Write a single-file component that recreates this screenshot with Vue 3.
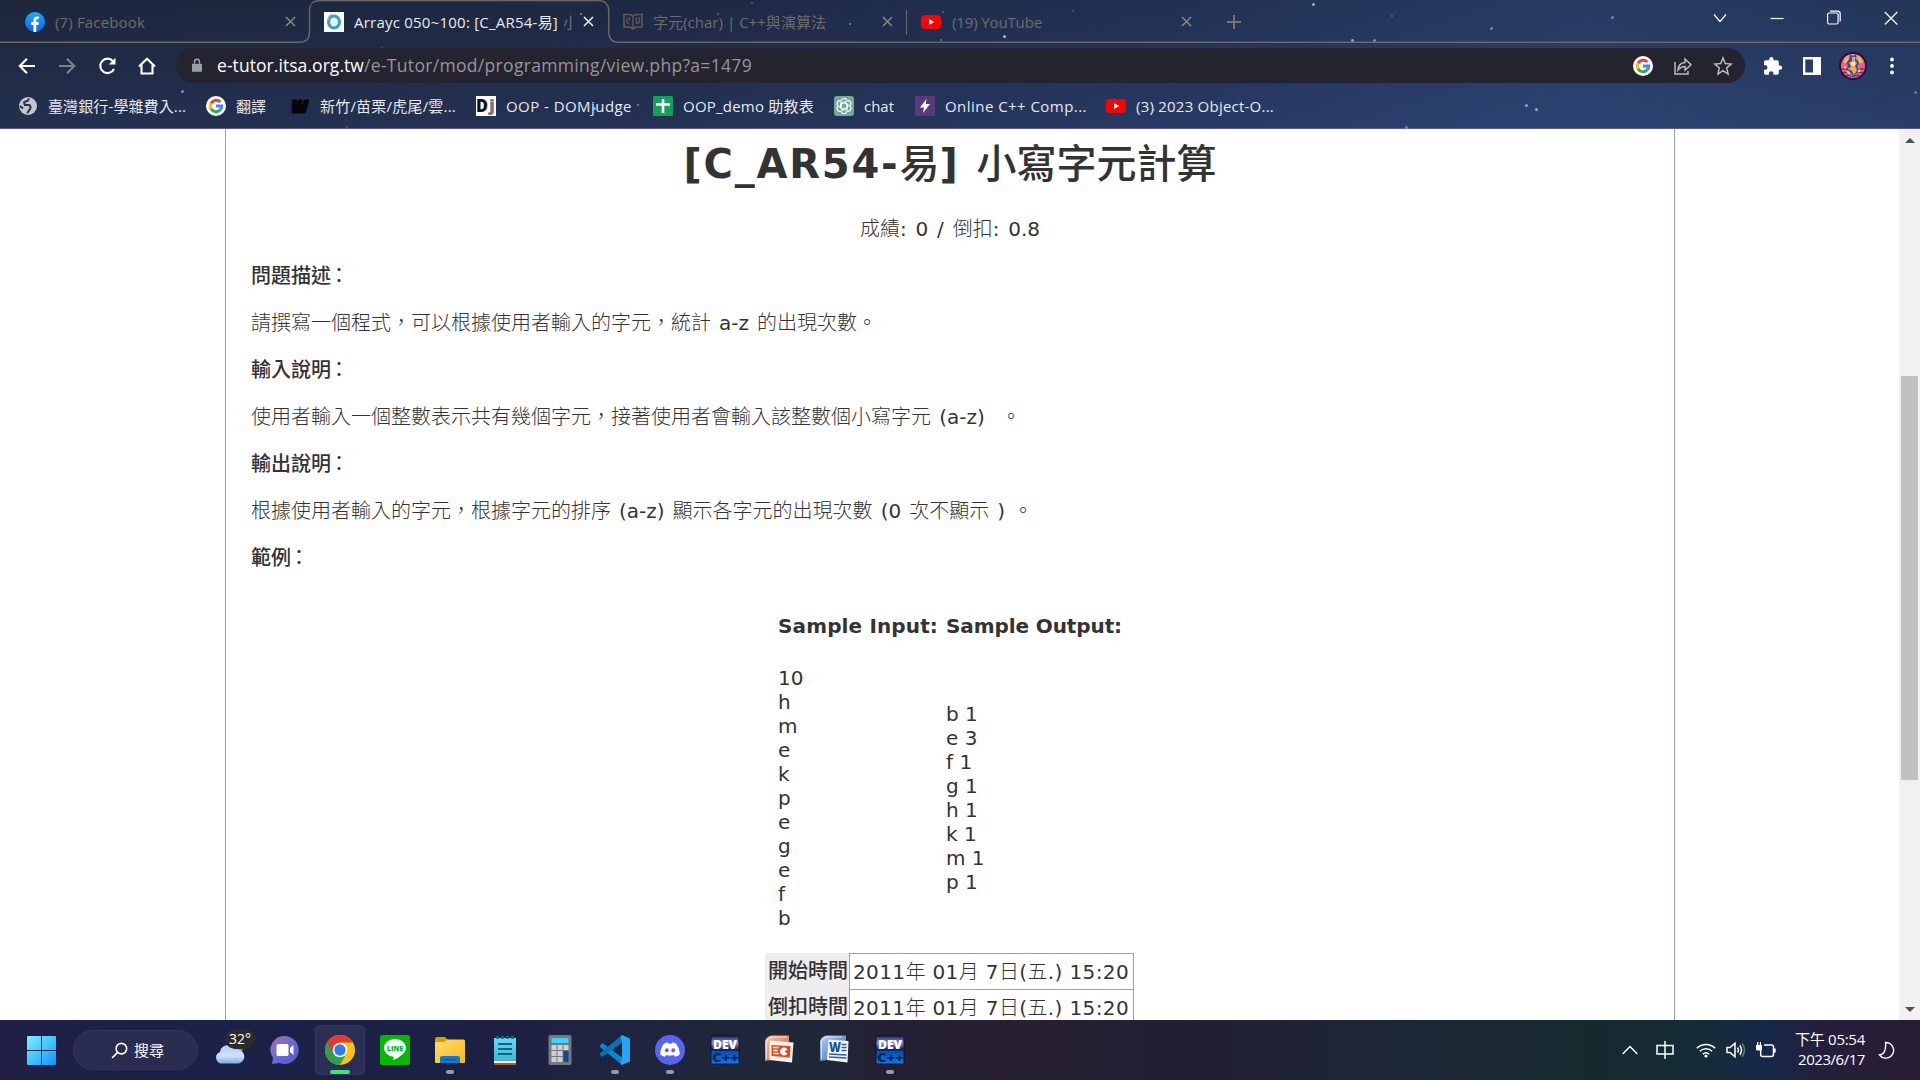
<script setup>
const fit = (el, { value, modifiers }) => {
  const text = el.textContent
  const slack = value - el.getBoundingClientRect().width
  if (modifiers.words) {
    el.style.wordSpacing = `${slack / (text.match(/[ \u00a0]/g) || [1]).length}px`
  } else {
    el.style.letterSpacing = `${slack / text.length}px`
  }
}
const vFit = { mounted: fit }

// Odd entries are runs of Latin characters, even entries everything else.
const runs = (text) => text.split(/([\x21-\x7e]+)/)

const tabs = [
  { icon: 'facebook', title: '(7) Facebook', w: 90, box: 302, pad: 25, gap: 10 },
  { icon: 'ring', title: 'Arrayc 050~100: [C_AR54-易]', w: 204, tail: '小', box: 298, pad: 22, gap: 10, active: true },
  { icon: 'book', title: '字元(char) | C++與演算法', w: 173, box: 299, pad: 23, gap: 10 },
  { icon: 'youtube', title: '(19) YouTube', w: 90, box: 299, pad: 22, gap: 11, split: true },
]
const bookmarks = [
  { icon: 'globe', title: '臺灣銀行-學雜費入...', w: 138, box: 188 },
  { icon: 'google', title: '翻譯', w: 30, box: 84 },
  { icon: 'wbold', title: '新竹/苗栗/虎尾/雲...', w: 136, box: 186 },
  { icon: 'dj', title: 'OOP - DOMjudge', w: 126, box: 177 },
  { icon: 'sheet', title: 'OOP_demo 助教表', w: 131, box: 181 },
  { icon: 'gpt', title: 'chat', w: 30, box: 81 },
  { icon: 'bolt', title: 'Online C++ Comp...', w: 142, box: 191 },
  { icon: 'youtube', title: '(3) 2023 Object-O...', w: 138, box: 200 },
]
const apps = [
  { icon: 'meet' },
  { icon: 'chrome', active: true },
  { icon: 'line' },
  { icon: 'folder', open: true },
  { icon: 'notepad' },
  { icon: 'calc' },
  { icon: 'vscode', open: true },
  { icon: 'discord', open: true },
  { icon: 'dev' },
  { icon: 'ppt' },
  { icon: 'word' },
  { icon: 'dev', open: true },
]
const letters = {
  dj: [
    { t: 'D', x: 0, y: 15.5, size: 18, len: 12, fill: '#111' },
    { t: 'j', x: 13, y: 15, size: 16, len: 6, fill: '#777' },
  ],
  line: [{ t: 'LINE', x: 7, y: 15.7, size: 6.5, len: 16, fill: '#00b900' }],
  dev: [
    { t: 'DEV', x: 3, y: 13.5, size: 12, len: 24, fill: '#fff' },
    { t: 'C++', x: 2, y: 26.5, size: 13, len: 27, fill: '#06265c' },
  ],
  word: [{ t: 'W', x: 9, y: 17, size: 14, len: 12, fill: '#1e4f9f' }],
}
const stars = [
  [581, 14, 2, 0.7], [382, 48, 2, 0.3], [182, 91, 3, 0.7], [347, 127, 2, 0.3], [594, 108, 3, 0.8],
  [638, 105, 2, 0.6], [752, 3, 2, 0.4], [718, 14, 2, 0.4], [850, 24, 2, 0.6], [943, 12, 2, 0.4],
  [1004, 36, 3, 1], [941, 40, 2, 0.5], [1073, 11, 2, 0.3], [1154, 110, 2, 0.5], [1313, 4, 3, 0.9],
  [1392, 16, 2, 0.4], [1491, 28, 3, 0.6], [1352, 40, 3, 0.9], [1374, 40, 3, 0.7], [1612, 17, 3, 0.6],
  [1526, 105, 3, 0.8], [1536, 109, 3, 0.9], [1406, 127, 3, 0.6], [1915, 92, 3, 0.5],
]
const sections = [
  { head: '問題描述', body: '請撰寫一個程式，可以根據使用者輸入的字元，統計 a-z 的出現次數。', w: 626 },
  { head: '輸入說明', body: '使用者輸入一個整數表示共有幾個字元，接著使用者會輸入該整數個小寫字元 (a-z)\u00a0\u00a0。', w: 770 },
  { head: '輸出說明', body: '根據使用者輸入的字元，根據字元的排序 (a-z) 顯示各字元的出現次數 (0 次不顯示 ) 。', w: 782 },
  { head: '範例' },
]
const sampleIn = ['10', 'h', 'm', 'e', 'k', 'p', 'e', 'g', 'e', 'f', 'b']
const sampleOut = ['b 1', 'e 3', 'f 1', 'g 1', 'h 1', 'k 1', 'm 1', 'p 1']
const dates = ['開始時間', '倒扣時間']
</script>

<template>
  <div class="desktop">
    <svg class="defs" width="0" height="0">
      <defs>
        <linearGradient id="gFb" x1="0" y1="0" x2="0" y2="1"><stop offset="0" stop-color="#19afff" /><stop offset="1" stop-color="#0866e8" /></linearGradient>
        <linearGradient id="gWin" x1="0" y1="0" x2="1" y2="1"><stop offset="0" stop-color="#7df1ff" /><stop offset="1" stop-color="#0a98fb" /></linearGradient>
        <linearGradient id="gCloud" x1="0" y1="0" x2="0" y2="1"><stop offset="0" stop-color="#b5d0f8" /><stop offset=".6" stop-color="#cfe0fa" /><stop offset="1" stop-color="#7fabe8" /></linearGradient>
        <linearGradient id="gMeet" x1="0" y1="0" x2="1" y2="1"><stop offset="0" stop-color="#b06ab5" /><stop offset=".45" stop-color="#6c6cd0" /><stop offset="1" stop-color="#5157cf" /></linearGradient>
        <linearGradient id="gFold" x1="0" y1="0" x2="1" y2="1"><stop offset="0" stop-color="#ffdc6b" /><stop offset="1" stop-color="#f9b81c" /></linearGradient>
        <linearGradient id="gNote" x1="0" y1="0" x2="0" y2="1"><stop offset="0" stop-color="#6cd7ee" /><stop offset="1" stop-color="#3fb4d3" /></linearGradient>
        <linearGradient id="gDev" x1="0" y1="0" x2="0" y2="1"><stop offset="0" stop-color="#26265c" /><stop offset=".25" stop-color="#8f90c8" /><stop offset=".5" stop-color="#15183f" /><stop offset=".55" stop-color="#0a4fae" /><stop offset="1" stop-color="#0b7cf0" /></linearGradient>
        <linearGradient id="gPpt" x1="0" y1="0" x2="1" y2="1"><stop offset="0" stop-color="#f9c9b2" /><stop offset="1" stop-color="#e2501d" /></linearGradient>
        <linearGradient id="gWord" x1="0" y1="0" x2="1" y2="1"><stop offset="0" stop-color="#b9d3f3" /><stop offset="1" stop-color="#2a60b5" /></linearGradient>
      </defs>
      <symbol id="facebook" viewBox="0 0 20 20"><circle cx="10" cy="10" r="10" fill="url(#gFb)" /><path d="M8.4 20v-7H6.2v-3h2.2V8.200c0-2.400 1.300-3.800 3.600-3.800.8 0 1.600.1 1.900.2v2.500h-1.200c-1.100 0-1.400.6-1.400 1.300V10h2.500l-.4 3h-2.100v7z" fill="#fff" /></symbol>
      <symbol id="ring" viewBox="0 0 20 20"><path d="M0 0h20v20H0z" fill="#fff" /><ellipse cx="10" cy="10" rx="5.500" ry="6" fill="#e3f1f5" stroke="#3e9fbb" stroke-width="3" /><path d="M4 8Q5 3 8 2.500" stroke="#9bb7c2" stroke-width="1.500" fill="none" /></symbol>
      <symbol id="book" viewBox="0 0 20 20"><path d="M1 2.500h6l3 1.500 3-1.500h6V15h-6l-3 2-3-2H1z" fill="none" stroke="#5f5c58" stroke-width="1.600" /><path d="M10 4V16M4 5.500v5l2 1.500M6.500 5v4M13.500 5v7M16.500 5v5l-2 2" fill="none" stroke="#5f5c58" stroke-width="1.300" /></symbol>
      <symbol id="youtube" viewBox="0 0 20 20"><rect y="3" width="20" height="14" rx="4" fill="#f00" /><path d="M8 7l5.200 3L8 13z" fill="#fff" /></symbol>
      <symbol id="globe" viewBox="0 0 20 20"><circle cx="10" cy="10" r="9" fill="#c3c7cc" /><path d="M11 2.500q-1 3-3.500 3T7 9h4q2.500 1 1 4t-3 4M2 10l3 2.500" fill="none" stroke="#25304c" stroke-width="2" /></symbol>
      <symbol id="google" viewBox="0 0 20 20"><circle cx="10" cy="10" r="10" fill="#fff" /><g fill="none" stroke-width="3"><path d="M14.300 6.100A5.800 5.800 0 0 0 5 7.200" stroke="#ea4335" /><path d="M5 7.200a5.800 5.800 0 0 0 0 5.600" stroke="#fbbc05" /><path d="M5 12.800a5.800 5.800 0 0 0 8.900 1.400" stroke="#34a853" /><path d="M13.900 14.200A5.500 5.500 0 0 0 15.700 10H10" stroke="#4285f4" /></g></symbol>
      <symbol id="wbold" viewBox="0 0 20 20"><path d="M2.500 4h4l-1 9 3-9H12l-.7 9L14.500 4H19l-4 13H9.500l.3-4-1.600 4H2z" fill="#050507" stroke="#050507" /></symbol>
      <symbol id="dj" viewBox="0 0 20 20"><path d="M0 0h20v20H0z" fill="#fff" /></symbol>
      <symbol id="sheet" viewBox="0 0 20 20"><rect width="20" height="20" rx="1.500" fill="#12a05c" /><path d="M10 3v14M3 8.500h14" stroke="#fff" stroke-width="2.600" /></symbol>
      <symbol id="gpt" viewBox="0 0 20 20"><rect width="20" height="20" rx="3" fill="#74aa9c" /><g fill="none" stroke="#fff" stroke-width="1.100"><path id="pet" d="M10 6.300L7 8V5.500a3 3 0 0 1 5.800-1.200M10 6.300l3.200 1.900v3.600" /><use href="#pet" transform="rotate(60 10 10)" /><use href="#pet" transform="rotate(120 10 10)" /><use href="#pet" transform="rotate(180 10 10)" /><use href="#pet" transform="rotate(240 10 10)" /><use href="#pet" transform="rotate(300 10 10)" /></g></symbol>
      <symbol id="bolt" viewBox="0 0 20 20"><path d="M0 0h20v20H0z" fill="#573c7c" /><path d="M11.500 3L5 11.500h4L8 17l7-9h-4.200z" fill="#fff" /></symbol>
      <symbol id="meet" viewBox="0 0 30 30"><path d="M15 1a14 14 0 1 1-5.500 27L2 29l1-6A14 14 0 0 1 15 1z" fill="url(#gMeet)" /><rect x="6.500" y="9" width="12" height="12" rx="1.500" fill="#fff" /><path d="M20 13l3.500-3v10L20 17z" fill="#fff" /></symbol>
      <symbol id="chrome" viewBox="0 0 30 30"><circle cx="15" cy="15" r="15" fill="#fbc116" /><path d="M2 7.500A15 15 0 0 0 15 30l6.500-11.500L15 15z" fill="#2da04e" /><path d="M2 7.500A15 15 0 0 1 28 7.500H15L8.500 18.700z" fill="#e23c2f" /><circle cx="15" cy="15" r="7.300" fill="#fff" /><circle cx="15" cy="15" r="5.700" fill="#2b7df0" /></symbol>
      <symbol id="line" viewBox="0 0 30 30"><rect width="30" height="30" rx="2.500" fill="#00b900" /><path d="M15 4C8.700 4 4 8 4 13c0 4.300 3.600 7.700 8.700 8.600.9.200 1 .7.700 3.500 4.500-2 12.600-6.600 12.600-12.100C26 8 21.300 4 15 4z" fill="#fff" /></symbol>
      <symbol id="folder" viewBox="0 0 30 30"><path d="M0 4q0-2 2-2h8l3 3h-2l-2 3H0z" fill="#dd9b06" /><path d="M0 7h9l3-2.500h16.500q1.500 0 1.500 1.500v21q0 1-1 1H1q-1 0-1-1z" fill="url(#gFold)" /><path d="M5 28v-5q0-2 2-2h16q2 0 2 2v5z" fill="#1579ca" /><path d="M8.500 24.700h13" stroke="#0b4f8e" stroke-width="1.200" /></symbol>
      <symbol id="notepad" viewBox="0 0 30 30"><path d="M4 26h22v3q0 1-1 1H5q-1 0-1-1z" fill="#b45a16" /><path d="M4 3h22v24H4z" fill="url(#gNote)" /><path d="M4 26h22v2H4z" fill="#f3efe8" /><g fill="#0b5f80"><circle cx="7.500" cy="2.200" r="1.800" /><circle cx="12.500" cy="2.200" r="1.800" /><circle cx="17.500" cy="2.200" r="1.800" /><circle cx="22.500" cy="2.200" r="1.800" /></g><path d="M8 9h14M8 14h14M8 19h14" stroke="#08668c" stroke-width="1.800" /></symbol>
      <symbol id="calc" viewBox="0 0 30 30"><rect x="3.500" width="23" height="30" rx="1.500" fill="#75797f" /><path d="M6.500 3h17v5h-17z" fill="#3dd5fb" /><path d="M6.500 10h5v5h-5zM12.500 10h5v5h-5zM18.500 10h5v5h-5zM6.500 16h5v5h-5zM12.500 16h5v5h-5zM6.500 22h5v5h-5zM12.500 22h5v5h-5z" fill="#ccd2da" /><path d="M18.500 16h5v11h-5z" fill="#134a8e" /></symbol>
      <symbol id="vscode" viewBox="0 0 30 30"><path d="M0 10.500L2.500 8 22 22.500V30L0 12z" fill="#0a86d2" /><path d="M22 0v7.500L2.500 22 0 19.800v-1.500z" fill="#0872b8" /><path d="M22 0l8 3.500v23L22 30l-1.500-1.500L22 22V8l-1.500-6.500z" fill="#27a5f2" /></symbol>
      <symbol id="discord" viewBox="0 0 30 30"><circle cx="15" cy="15" r="15" fill="#5865f2" /><path d="M9 8.500Q11 7.500 13 7.400l.7 1.300h2.600l.7-1.300q2 .1 4 1.100 4 5.500 3.700 11-2 1.800-4.700 2.300l-1-1.800q-4 1.200-8 0l-1 1.800q-2.700-.5-4.700-2.300Q5 14 9 8.500z" fill="#fff" /><ellipse cx="11.800" cy="15.300" rx="1.900" ry="2.100" fill="#5865f2" /><ellipse cx="18.200" cy="15.300" rx="1.900" ry="2.100" fill="#5865f2" /></symbol>
      <symbol id="dev" viewBox="0 0 30 30"><rect x="1" y="1" width="28" height="28" rx="1.500" fill="url(#gDev)" stroke="#0c1233" /></symbol>
      <symbol id="ppt" viewBox="0 0 30 30"><path d="M0 26V6Q2 .5 8 .5h16V22z" fill="url(#gPpt)" /><path d="M1.500 24V7Q3 2 8 2h14" stroke="#fff" stroke-opacity=".6" fill="none" /><path d="M4.500 5.500l24 2L27 27.500 4.500 25z" fill="#fff4ef" /><path d="M6.500 10l19 1-.7 11.500L6.500 21z" fill="#e5481b" /><path d="M8 12.500h6M8 15.500h5M8 18.500h6" stroke="#fff" stroke-width="1.700" /><path d="M22.500 14.500a4 4 0 1 0 0 4l-3-2z" fill="#fff" /></symbol>
      <symbol id="word" viewBox="0 0 30 30"><path d="M0 26V6Q2 .5 8 .5h18V22z" fill="url(#gWord)" /><path d="M1.500 24V7Q3 2 8 2h14" stroke="#fff" stroke-opacity=".6" fill="none" /><path d="M8.500 4.500l20 1.500L27.500 27.500 7 25z" fill="#f3f7fd" /><path d="M21.500 9.500h5M21.500 12.500h5M21.500 15.500h5M9 19l17.500 1M9 22l17.500 1" stroke="#2a5cae" stroke-width="1.500" /></symbol>
    </svg>

    <header class="chrome">
      <i v-for="(s, i) in stars" :key="i" class="star" :style="{ left: s[0] - 1 + 'px', top: s[1] - 1 + 'px', width: s[2] + 'px', height: s[2] + 'px', opacity: s[3] }"></i>
      <svg class="outline" width="1920" height="44" viewBox="0 0 1920 44"><path d="M0 42.300H299Q309.500 42.300 309.500 32V11Q309.500.5 320 .5H598Q608.700.5 608.700 11V32Q608.700 42.300 619 42.300H1920" /></svg>
      <div class="strip">
        <div v-for="t in tabs" :key="t.title" class="tab" :class="{ active: t.active, split: t.split }" :style="{ width: t.box + 'px', paddingLeft: t.pad + 'px', columnGap: t.gap + 'px' }">
          <svg class="fav"><use :href="'#' + t.icon" /></svg>
          <span class="label"><span v-fit="t.w" class="ib">{{ t.title }}</span><span v-if="t.tail" class="tail">{{ t.tail }}</span></span>
          <svg class="x" viewBox="0 0 11 11"><path d="M1 1l9 9M10 1l-9 9" /></svg>
        </div>
        <svg class="plus" viewBox="0 0 16 16"><path d="M8 1v14M1 8h14" /></svg>
        <div class="winctl">
          <svg viewBox="0 0 14 20"><path d="M1 6.500l6 7 6-7" /></svg>
          <svg viewBox="0 0 14 20"><path d="M.5 10.500h13" /></svg>
          <svg viewBox="0 0 14 20"><rect x=".6" y="5" width="10.500" height="11" rx="1.500" /><path d="M3 3.200h7.500q2.700 0 2.700 2.700v7.600" /></svg>
          <svg viewBox="0 0 14 20"><path d="M.8 4l12.500 12.500M13.300 4L.8 16.500" /></svg>
        </div>
      </div>
      <div class="toolbar">
        <div class="nav">
          <svg viewBox="0 0 20 20"><path d="M18 10H3M10 2.800L2.800 10l7.200 7.200" /></svg>
          <svg class="dim" viewBox="0 0 20 20"><path d="M2 10h15M10 2.800l7.200 7.200-7.200 7.200" /></svg>
          <svg viewBox="0 0 20 20"><path d="M17 13A7.200 7.200 0 1 1 16 5.200L17.500 7" /><path d="M18.500 1.800V8.500h-6.700z" class="solid" /></svg>
          <svg viewBox="0 0 20 20"><path d="M2 10.500L10 2.800l8 7.700M4.500 9v8.500h11V9" /></svg>
        </div>
        <div class="omni">
          <svg class="lock" viewBox="0 0 14 18"><path d="M1 7h12v9.500H1z" fill="#9aa0a6" /><path d="M4 7V4.500a3 3 0 0 1 6 0V7" fill="none" stroke="#9aa0a6" stroke-width="1.700" /></svg>
          <span class="url"><span v-fit="147" class="ib host">e-tutor.itsa.org.tw</span><span v-fit="388" class="ib">/e-Tutor/mod/programming/view.php?a=1479</span></span>
          <svg class="og"><use href="#google" /></svg>
          <svg class="oi" viewBox="0 0 20 20"><path d="M2 6v12h13v-3" /><path d="M5 14q.5-7 7-7.500V3l6 5.700-6 5.300v-3.500Q8 10.500 5 14z" /></svg>
          <svg class="oi" viewBox="0 0 20 20"><path d="M10 2l2.300 5.500 6 .5-4.600 3.900L15.100 18 10 14.600 4.900 18l1.400-6.100L1.700 8l6-.5z" /></svg>
        </div>
        <svg class="ext" viewBox="0 0 20 20"><path d="M17 9.500h-1.200V6q0-1.700-1.700-1.700h-3.600V3a2.100 2.100 0 0 0-4.200 0v1.300H2.700Q1 4.300 1 6v3.200h1.200a2.300 2.300 0 0 1 0 4.600H1V17q0 1.700 1.700 1.700h3.200v-1.200a2.300 2.300 0 0 1 4.600 0v1.200h3.600q1.700 0 1.700-1.700v-3.200H17a2.150 2.150 0 0 0 0-4.300z" fill="#fff" /></svg>
        <svg class="side" viewBox="0 0 18 18"><path d="M0 0h18v18H0zM2.300 2.500v13h7.700v-13z" fill="#fff" fill-rule="evenodd" /></svg>
        <svg class="avatar" viewBox="0 0 28 28"><circle cx="14" cy="14" r="14" fill="#241044" /><circle cx="14" cy="14" r="12" fill="#f2607c" /><path d="M6 5q8-6 16 0l2 5H4z" fill="#f6a36f" /><path d="M3 17h22M4 20.500h20M7 23.500h14" stroke="#8a1f7d" stroke-width="1.500" /><path d="M11 2l3 2 3-2 1 5 2 3-1 4 1 5-3 2-1 4h-4l-2-4-3-3 2-4-2-4 3-3z" fill="#5a3aa0" /><path d="M13 5h3v4l2 2-2 3 2 4-3 5-2-4-3-2 2-3-2-3 3-2z" fill="#f0b13c" /><path d="M12 10h4v4h-4z" fill="#ffe0b0" /><path d="M6 11l3-4M20 8l2 3M8 19l3 3M19 20l2-2M5 15l2 1" stroke="#ffd33f" stroke-width="2" /><path d="M13 8l2 1M17 5l1 3M9 16l2 2M19 14l1 3M12 22l1 2" stroke="#3ac1d6" stroke-width="1.500" /></svg>
        <svg class="dots" viewBox="0 0 4 18"><circle cx="2" cy="2.500" r="1.900" /><circle cx="2" cy="9" r="1.900" /><circle cx="2" cy="15.500" r="1.900" /></svg>
      </div>
      <div class="bookmarks">
        <div v-for="b in bookmarks" :key="b.title" class="bm" :style="{ width: b.box + 'px' }">
          <svg class="fav"><use :href="'#' + b.icon" /><text v-for="l in letters[b.icon]" :key="l.t" class="mark" :x="l.x" :y="l.y" :font-size="l.size" :textLength="l.len" :fill="l.fill" lengthAdjust="spacingAndGlyphs">{{ l.t }}</text></svg>
          <span v-fit="b.w" class="ib">{{ b.title }}</span>
        </div>
      </div>
    </header>

    <main class="view">
      <div class="sheet" lang="zh-TW">
        <h1><b v-fit="216" class="ib">[C_AR54-</b>易<b v-fit="37" class="ib pre">] </b>小寫字元計算</h1>
        <p class="score"><span v-fit.words="180" class="ib"><span v-for="(r, i) in runs('成績: 0 / 倒扣: 0.8')" :key="i" :class="{ latin: i % 2 }">{{ r }}</span></span></p>
        <template v-for="s in sections" :key="s.head">
          <p class="head">{{ s.head }}<span class="colon">：</span></p>
          <p v-if="s.body"><span v-fit.words="s.w" class="ib pre"><span v-for="(r, i) in runs(s.body)" :key="i" :class="{ latin: i % 2 }">{{ r }}</span></span></p>
        </template>
        <div class="sample">
          <div class="col in">
            <div class="cap"><b v-fit="160" class="ib">Sample Input:</b></div>
            <div class="lines"><div v-for="(l, i) in sampleIn" :key="i">{{ l }}</div></div>
          </div>
          <div class="col out">
            <div class="cap"><b v-fit="176" class="ib">Sample Output:</b></div>
            <div class="lines"><div v-for="l in sampleOut" :key="l">{{ l }}</div></div>
          </div>
        </div>
        <div class="dates">
          <div v-for="d in dates" :key="d" class="row">
            <div class="th">{{ d }}</div>
            <div class="td"><span v-fit="276" class="ib pre"><span v-for="(r, i) in runs('2011年 01月 7日(五.) 15:20')" :key="i" :class="{ latin: i % 2 }">{{ r }}</span></span></div>
          </div>
        </div>
      </div>
      <div class="scroll">
        <i class="up"></i>
        <div class="thumb"></div>
        <i class="down"></i>
      </div>
    </main>

    <footer class="taskbar">
      <svg class="win" viewBox="0 0 29 29"><path d="M1 0h13v14H0V1q0-1 1-1zM15 0h13q1 0 1 1v13H15zM0 15h14v14H1q-1 0-1-1zM15 15h14v13q0 1-1 1H15z" fill="url(#gWin)" /></svg>
      <div class="search">
        <svg viewBox="0 0 18 18"><circle cx="11" cy="7" r="5.600" /><path d="M7 11l-5.800 5.800" /></svg>
        <span>搜尋</span>
      </div>
      <div class="weather">
        <svg viewBox="0 0 30 30"><circle cx="22" cy="13" r="6.500" fill="#e8712a" /><path d="M6 29.500a6 6 0 0 1-1-11.500A8 8 0 0 1 20 15.500a7 7 0 0 1 4 14z" fill="url(#gCloud)" /></svg>
        <span class="temp">32°</span>
      </div>
      <div v-for="(a, i) in apps" :key="i" class="app" :class="{ active: a.active, open: a.open }">
        <svg><use :href="'#' + a.icon" /><text v-for="l in letters[a.icon]" :key="l.t" class="mark" :x="l.x" :y="l.y" :font-size="l.size" :textLength="l.len" :fill="l.fill" lengthAdjust="spacingAndGlyphs">{{ l.t }}</text></svg>
      </div>
      <div class="tray">
        <svg class="caret" viewBox="0 0 16 10"><path d="M.7 9L8 1.500 15.300 9" /></svg>
        <svg class="ime" viewBox="0 0 18 20"><path d="M9 1v18M1 5.500h16v8.500H1z" /></svg>
        <svg class="wifi" viewBox="0 0 20 16"><path d="M.8 6.200a13 13 0 0 1 18.400 0M3.800 9.300a8.800 8.800 0 0 1 12.400 0M6.800 12.200a4.500 4.500 0 0 1 6.400 0" /><circle cx="10" cy="14" r="1.600" fill="#fff" stroke="none" /></svg>
        <svg class="vol" viewBox="0 0 20 16"><path d="M1 5.500h3l5-4.300v13.600l-5-4.300H1zM11.500 5.500q1.800 2.500 0 5M13.800 3.300q3.400 4.700 0 9.400" /><path d="M16 1.200q5 6.800 0 13.600" opacity=".35" /></svg>
        <svg class="bat" viewBox="0 0 20 16"><path d="M8 3h7.500q2 0 2 2v7.500q0 2-2 2h-9q-1.800 0-1.800-2V8" /><path d="M0 3h6v4q0 1.500-1.500 1.500h-3Q0 8.500 0 7zM1 0h1.300v3H1zM3.800 0H5v3H3.800zM18 6.500h1.700v4H18z" fill="#fff" stroke="none" /></svg>
        <div class="clock"><span v-fit="70" class="ib">下午 05:54</span><span v-fit="67" class="ib">2023/6/17</span></div>
        <svg class="moon" viewBox="0 0 18 20"><path d="M8 1.500a8.300 8.300 0 1 1-6.500 13.200Q9 14 8 1.500z" /></svg>
      </div>
    </footer>
  </div>
</template>

<style>
body {
  margin: 0;
  overflow: hidden;
}
</style>

<style scoped>
* {
  box-sizing: border-box;
}
.desktop {
  width: 1920px;
  height: 1080px;
  overflow: hidden;
  display: flex;
  flex-direction: column;
  background: #fff;
  font-family: "Open Sans", "Noto Sans CJK TC", sans-serif;
}
.defs {
  position: absolute;
}
svg {
  display: block;
  flex: none;
}
.mark {
  font-family: "Open Sans", sans-serif;
  font-weight: 800;
}
.ib {
  display: inline-block;
  white-space: nowrap;
}
.pre {
  white-space: pre;
}
.chrome {
  position: relative;
  flex: none;
  height: 129px;
  border-bottom: 1px solid #59598c;
  background:
    linear-gradient(180deg, rgba(0, 0, 0, 0.08), rgba(60, 90, 170, 0.13)),
    linear-gradient(97deg, #1f2a41 0%, #202c48 35%, #24355a 62%, #2a3f6a 82%, #26395e 100%);
}
.star {
  position: absolute;
  border-radius: 50%;
  background: #9db9ec;
}
.outline {
  position: absolute;
  left: 0;
  top: 0;
}
.outline path {
  fill: none;
  stroke: #6a6764;
  stroke-width: 1.4;
}
.strip {
  position: relative;
  height: 43px;
  display: flex;
}
.tab {
  position: relative;
  display: flex;
  align-items: center;
  height: 43px;
  padding-right: 6px;
  font-size: 15px;
  line-height: 20px;
  color: #6f6c69;
}
.tab.active {
  color: #e9ebef;
}
.tab.split::before {
  content: "";
  position: absolute;
  left: 7px;
  top: 10px;
  width: 1px;
  height: 25px;
  background: #6a6764;
}
.fav {
  width: 20px;
  height: 20px;
}
.label {
  flex: 1;
  display: flex;
  overflow: hidden;
  white-space: nowrap;
}
.tail {
  width: 10px;
  margin-left: 5px;
  overflow: hidden;
  color: #6b7180;
}
.x {
  width: 11px;
  height: 11px;
  fill: none;
  stroke: #8a8784;
  stroke-width: 1.5;
}
.active .x {
  stroke: #f2f2f2;
}
.plus {
  align-self: center;
  width: 16px;
  height: 16px;
  margin-left: 28px;
  fill: none;
  stroke: #77746f;
  stroke-width: 2;
}
.winctl {
  display: flex;
  gap: 43px;
  margin: 8px 22px 0 auto;
}
.winctl svg {
  width: 14px;
  height: 20px;
  fill: none;
  stroke: #fff;
  stroke-width: 1.2;
}
.toolbar {
  position: relative;
  display: flex;
  align-items: center;
  height: 45px;
  padding-right: 26px;
}
.nav {
  width: 176px;
  padding-left: 17px;
  display: flex;
  gap: 20px;
}
.nav svg {
  width: 20px;
  height: 20px;
  fill: none;
  stroke: #fff;
  stroke-width: 2.1;
}
.nav .dim {
  stroke: #7f828b;
}
.nav .solid {
  fill: #fff;
  stroke: none;
}
.omni {
  display: flex;
  align-items: center;
  width: 1569px;
  height: 35px;
  border-radius: 18px;
  padding: 0 12px 0 15px;
  background: #242430;
  color: #95959a;
  font-size: 17.500px;
}
.lock {
  width: 12px;
  height: 15px;
}
.url {
  flex: 1;
  margin-left: 14px;
  line-height: 24px;
  margin-top: -1px;
}
.host {
  color: #fff;
}
.og {
  width: 20px;
  height: 20px;
}
.oi {
  width: 20px;
  height: 20px;
  margin-left: 20px;
  fill: none;
  stroke: #b9b9bd;
  stroke-width: 1.500;
}
.ext {
  width: 20px;
  height: 20px;
  margin-left: 18px;
}
.side {
  width: 18px;
  height: 18px;
  margin-left: 20px;
}
.avatar {
  width: 28px;
  height: 28px;
  margin-left: 18px;
}
.dots {
  width: 4px;
  height: 18px;
  margin-left: auto;
  fill: #fff;
}
.bookmarks {
  position: relative;
  display: flex;
  height: 36px;
  padding-left: 18px;
}
.bm {
  display: flex;
  align-items: center;
  gap: 10px;
  flex: none;
  font-size: 15px;
  line-height: 20px;
  color: #e6e9ef;
}
.view {
  display: flex;
  flex: none;
  height: 891px;
  overflow: hidden;
  background: #fff;
}
.sheet {
  width: 1450px;
  margin-left: 225px;
  border-left: 1px solid #95a3ae;
  border-right: 1px solid #95a3ae;
  padding: 11px 25px 0;
  color: #333;
  font-family: "DejaVu Sans", "Noto Sans CJK TC", sans-serif;
  font-size: 20px;
  font-weight: 300;
  line-height: 27px;
}
h1 {
  margin: 0 0 28px;
  font-size: 40px;
  line-height: 48px;
  font-weight: 500;
  text-align: center;
}
b {
  font-weight: 700;
}
p {
  margin: 0 0 20px;
  height: 27px;
}
.latin {
  font-weight: 400;
}
.score {
  text-align: center;
}
.head {
  font-weight: 500;
}
.colon {
  margin-left: -2px;
  font-weight: 400;
}
.sample {
  display: flex;
  margin: 42px 0 0 527px;
  font-weight: 400;
}
.col {
  display: flex;
  flex-direction: column;
  line-height: 24px;
}
.in {
  width: 168px;
}
.cap {
  height: 24px;
  white-space: nowrap;
}
.in .lines {
  margin-top: 28px;
}
.out .lines {
  margin-top: 64px;
}
.dates {
  margin: 23px 0 0 514px;
  width: 370px;
}
.row {
  display: flex;
  height: 36px;
}
.th {
  width: 84px;
  padding-left: 3px;
  background: #eee;
  font-weight: 500;
  line-height: 37px;
}
.td {
  width: 285px;
  border: 1px solid #95a3ae;
  border-bottom: 0;
  padding-left: 3px;
  line-height: 37px;
}
.scroll {
  position: relative;
  width: 21px;
  margin-left: auto;
  padding-top: 247px;
  background: #f1f1f1;
}
.thumb {
  width: 17px;
  height: 404px;
  margin: 0 auto;
  background: #c1c1c1;
}
.up,
.down {
  position: absolute;
  left: 6px;
  border: 5px solid transparent;
}
.up {
  top: 4px;
  border-bottom-color: #505050;
}
.down {
  bottom: 3px;
  border-top-color: #505050;
}
.taskbar {
  position: relative;
  display: flex;
  align-items: center;
  flex: none;
  height: 60px;
  color: #fff;
  background: linear-gradient(90deg, #211f45 0%, #1b2149 10%, #1d2043 25%, #1e2440 31%, #1f2837 42%, #241f33 47%, #281f32 52%, #221f33 62%, #1c2836 74%, #17292f 83%, #152c37 89%, #162849 92%, #241f3b 95%, #281e34 100%);
}
.win {
  width: 29px;
  height: 29px;
  margin-left: 27px;
}
.search {
  display: flex;
  align-items: center;
  width: 125px;
  height: 40px;
  margin-left: 17px;
  padding-left: 37px;
  gap: 6px;
  border-radius: 20px;
  border: 1px solid #343660;
  background: #2b2c52;
  font-size: 15px;
}
.search span {
  margin-top: -2px;
}
.search svg {
  width: 17px;
  height: 17px;
  fill: none;
  stroke: #fff;
  stroke-width: 1.700;
}
.weather {
  position: relative;
  width: 30px;
  height: 30px;
  margin-left: 17px;
  margin-right: 15px;
}
.weather svg {
  width: 30px;
  height: 30px;
  margin-top: -1px;
}
.temp {
  position: absolute;
  left: 10px;
  top: -6px;
  width: 30px;
  height: 20px;
  border-radius: 10px;
  background: #2b2b2b;
  font-size: 14px;
  line-height: 19px;
  text-align: center;
}
.app {
  position: relative;
  display: flex;
  align-items: center;
  justify-content: center;
  width: 50px;
  height: 50px;
  margin-right: 5px;
  border-radius: 5px;
}
.app svg {
  width: 30px;
  height: 30px;
}
.app.active {
  background: #2b2e55;
  border: 1px solid #363961;
}
.app.active::after,
.app.open::after {
  content: "";
  position: absolute;
  left: 21px;
  bottom: 1px;
  width: 8px;
  height: 4px;
  border-radius: 2px;
  background: #9a9aa6;
}
.app.active::after {
  left: 14px;
  bottom: 0;
  width: 20px;
  background: #3ee66e;
}
.tray {
  display: flex;
  align-items: center;
  margin-left: auto;
  padding-right: 25px;
}
.tray svg {
  fill: none;
  stroke: #fff;
  stroke-width: 1.500;
}
.caret {
  width: 16px;
  height: 10px;
}
.ime {
  width: 18px;
  height: 20px;
  margin-left: 18px;
}
.wifi {
  width: 20px;
  height: 16px;
  margin-left: 22px;
}
.vol {
  width: 20px;
  height: 16px;
  margin-left: 10px;
}
.bat {
  width: 20px;
  height: 16px;
  margin-left: 10px;
}
.clock {
  display: flex;
  flex-direction: column;
  align-items: flex-end;
  width: 89px;
  margin-top: -2px;
  font-size: 15px;
  line-height: 20px;
}
.moon {
  width: 17px;
  height: 19px;
  margin-left: 13px;
}
</style>
